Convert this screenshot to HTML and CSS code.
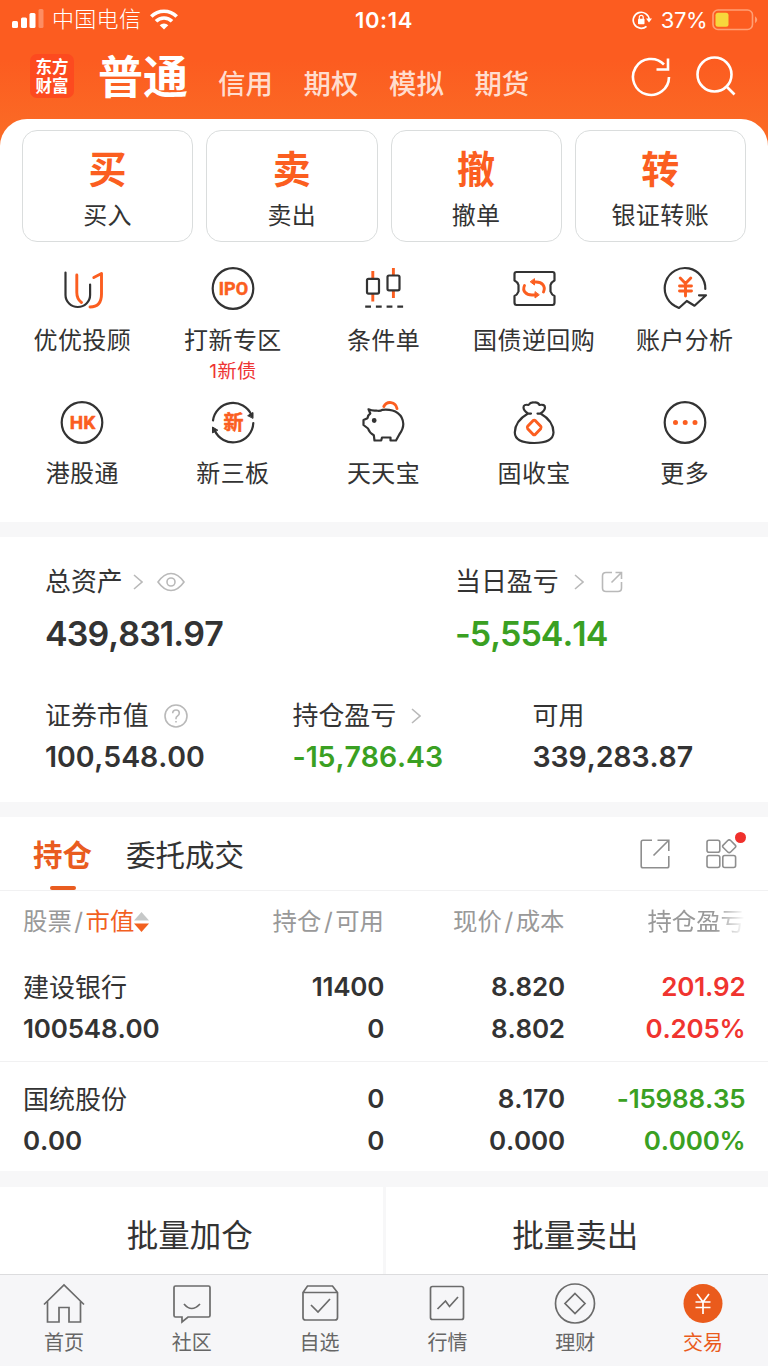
FILE: index.html
```html
<!DOCTYPE html>
<html lang="zh-CN">
<head>
    <meta charset="utf-8">
    <title>交易</title>
    <link rel="stylesheet" href="styles.css">
</head>
<body>
    <header class="top">
        <div class="status">
            <div class="status-left">
                <svg width="32" height="20" viewBox="0 0 32 20" fill="#fff">
                    <rect x="0" y="12" width="6" height="7" rx="1.5"/>
                    <rect x="9" y="8.500" width="6" height="10.500" rx="1.500"/>
                    <rect x="17.500" y="4" width="6" height="15" rx="1.500"/>
                    <rect x="26.500" y="0" width="5" height="19" rx="1.500" opacity=".3"/>
                </svg>
                <span class="carrier">中国电信</span>
                <svg width="28" height="21" viewBox="0 0 28 21" fill="none" stroke="#fff" stroke-width="3.600">
                    <path d="M1.300 7.500a18 18 0 0 1 25.400 0"/>
                    <path d="M6 12.300a11.300 11.300 0 0 1 16 0"/>
                    <path d="M14 20.500l-4.300-4.300a6.200 6.200 0 0 1 8.600 0z" fill="#fff" stroke="none"/>
                </svg>
            </div>
            <span class="clock">10:14</span>
            <div class="status-right">
                <svg width="20" height="20" viewBox="0 0 20 20" fill="none" stroke="#fff" stroke-width="1.700">
                    <path d="M14.500 16.300a8 8 0 1 1 2.700-6.800"/>
                    <path d="M14 8.500h6l-3 4z" fill="#fff" stroke="none"/>
                    <rect x="6" y="8.700" width="6.500" height="5.500" rx=".8" fill="#fff" stroke="none"/>
                    <path d="M7.300 9V7.300a1.950 1.950 0 0 1 3.900 0V9" stroke-width="1.200"/>
                </svg>
                <span class="percent">37%</span>
                <svg width="46" height="22" viewBox="0 0 46 22">
                    <rect x="1" y="1" width="39.500" height="19.500" rx="5" fill="none" stroke="#ff9f74" stroke-width="1.600"/>
                    <rect x="3.500" y="3.700" width="13" height="14" rx="2.500" fill="#f7d83c"/>
                    <path d="M43 7.300q4.500 3.500 0 7z" fill="#ff9f74"/>
                </svg>
            </div>
        </div>
        <nav class="accounts">
            <div class="logo">东方<br>财富</div>
            <a class="account current">普通</a>
            <a class="account">信用</a>
            <a class="account">期权</a>
            <a class="account">模拟</a>
            <a class="account">期货</a>
            <div class="tools">
                <svg width="40" height="42" viewBox="0 0 40 42" fill="none" stroke="#fff" stroke-width="2.600">
                    <path d="M38 21A18 18 0 1 1 33 8.500"/>
                    <path d="M37 2.500V13.500H25.500"/>
                </svg>
                <svg width="40" height="42" viewBox="0 0 40 42" fill="none" stroke="#fff" stroke-width="2.600">
                    <circle cx="18.500" cy="18.500" r="17"/>
                    <path d="M30.500 30.500L38.500 38.500"/>
                </svg>
            </div>
        </nav>
    </header>

    <main class="sheet">
        <section class="actions">
            <a class="action"><b>买</b><span>买入</span></a>
            <a class="action"><b>卖</b><span>卖出</span></a>
            <a class="action"><b>撤</b><span>撤单</span></a>
            <a class="action"><b>转</b><span>银证转账</span></a>
        </section>

        <section class="grid">
            <a class="cell">
                <svg class="icon" viewBox="0 0 44 44">
                    <path d="M5.500 5.500V28a12.300 12 0 0 0 24.600 0V17.500"/>
                    <path class="hot" d="M16.800 8v17.500q0 6.500 4.700 10M33.800 10.500l7.700-4V27q0 13-11.500 13"/>
                </svg>
                <span>优优投顾</span>
            </a>
            <a class="cell">
                <svg class="icon" viewBox="0 0 44 44">
                    <circle cx="22" cy="21.500" r="20.300"/>
                    <text class="mark ipo" x="22.500" y="28">IPO</text>
                </svg>
                <span>打新专区</span>
                <em>1新债</em>
            </a>
            <a class="cell">
                <svg class="icon" viewBox="0 0 44 44">
                    <path class="hot butt" d="M11.800 4v7M11.800 27v7.500M32.400 1v7M32.400 23.500v7.500"/>
                    <rect x="6" y="11.800" width="12" height="14.800" rx="1.500"/>
                    <rect x="26.500" y="8.500" width="12" height="14.800" rx="1.500"/>
                    <path class="butt" d="M4.200 39.700h38" stroke-dasharray="5.800 4.900"/>
                </svg>
                <span>条件单</span>
            </a>
            <a class="cell">
                <svg class="icon" viewBox="0 0 44 44">
                    <path d="M4.500 5h36q2 0 2 2v6.500q-3 1.500-4 4.500v6.500q1 3 4 4.500v6.500q0 2.500-2 2.500h-36q-2 0-2-2.500V29q3-1.500 4-4.500V18q-1-3-4-4.500V7q0-2 2-2z"/>
                    <path class="hot" d="M12.500 18.500C10 24 14 28 20 28h4M31.500 25C34 19 30 15 24 15h-3"/>
                    <path class="hot fill" d="M22.500 12v6l-4-3zM23 25v6l4-3z"/>
                </svg>
                <span>国债逆回购</span>
            </a>
            <a class="cell">
                <svg class="icon" viewBox="0 0 44 44">
                    <path d="M42.300 22A20.300 20.300 0 1 0 12 39l4 2 7.800-7 7.700 4.700L43 28.300h-7"/>
                    <path class="hot" d="M17.200 11l5.300 5.600L27.800 11M22.500 17v12M16.500 19h12M16.500 24h12"/>
                </svg>
                <span>账户分析</span>
            </a>
            <a class="cell">
                <svg class="icon" viewBox="0 0 44 44">
                    <circle cx="22" cy="21.500" r="20.300"/>
                    <text class="mark" x="22.500" y="28">HK</text>
                </svg>
                <span>港股通</span>
            </a>
            <a class="cell">
                <svg class="icon" viewBox="0 0 44 44">
                    <path d="M2 19.500A20.200 20.200 0 0 1 40.500 14M42.300 22A20.200 20.200 0 0 1 3.500 29"/>
                    <path class="tip" d="M37 14.500l5-3v5.500zM1.500 31.500V26l5 3z"/>
                    <text class="mark cn" x="22.500" y="29">新</text>
                </svg>
                <span>新三板</span>
            </a>
            <a class="cell">
                <svg class="icon" viewBox="0 0 44 44">
                    <path d="M7.500 8.300q4 1.700 7.700 1.200 4 .8 6-.7C35 7.500 42 14 42.300 23q0 5-4 10.500L35 39.500h-5.500V36.500H21l-.8 3H13.500l-.7-5.300Q8.500 32 7 27.500L2.500 24v-5l4-1.800Q7 14 9.300 12.500z"/>
                    <circle class="solid" cx="13.200" cy="19.500" r="1.300"/>
                    <path class="hot" d="M22.800 5.500C26-.5 34.500.5 36 7.500"/>
                </svg>
                <span>天天宝</span>
            </a>
            <a class="cell">
                <svg class="icon" viewBox="0 0 44 44">
                    <path d="M16 12.500q-4.500-3-4.500-6 0-3.500 5-2.500 2-3 5.500-2.500 4-.5 5.500 2.500 5.500-1 5.500 2.500 0 3-4.500 6Q41.500 20 41.500 31.500 41 42 22.200 42 3 42 2.800 31.500 3 20 16 12.500zM15 12.600h4M25.500 12.600h4"/>
                    <path class="hot" d="M21 19.700l-5.300 5.600q-1 1.200 0 2.400l5.300 5.600q1.200 1 2.400 0l5.300-5.600q1-1.200 0-2.400l-5.300-5.600q-1.200-1-2.400 0z"/>
                </svg>
                <span>固收宝</span>
            </a>
            <a class="cell">
                <svg class="icon" viewBox="0 0 44 44">
                    <circle cx="22" cy="21.500" r="20.300"/>
                    <path class="hot dots" d="M12.500 21.500h0M22.200 21.500h0M32 21.500h0"/>
                </svg>
                <span>更多</span>
            </a>
        </section>
    </main>

    <section class="assets">
        <div class="assets-row total">
            <div>
                <div class="label">总资产
                    <svg class="chevron" viewBox="0 0 10 16"><path d="M1 1l8 7-8 7"/></svg>
                    <svg class="eye" viewBox="0 0 28 20"><path d="M1 10Q7 1.500 14 1.500T27 10Q21 18.500 14 18.500T1 10z"/><circle cx="14" cy="10" r="4"/></svg>
                </div>
                <div class="value">439,831.97</div>
            </div>
            <div>
                <div class="label">当日盈亏
                    <svg class="chevron far" viewBox="0 0 10 16"><path d="M1 1l8 7-8 7"/></svg>
                    <svg class="share" viewBox="0 0 22 22"><path d="M11 1.500H5q-3.500 0-3.500 3.500v12q0 3.500 3.500 3.500h12q3.500 0 3.500-3.500V11M10.500 11.500L20.500 1.500M14.500 1.500h6V8"/></svg>
                </div>
                <div class="value down">-5,554.14</div>
            </div>
        </div>
        <div class="assets-row detail">
            <div>
                <div class="label">证券市值
                    <svg class="help" viewBox="0 0 24 24"><circle cx="12" cy="12" r="11"/><path d="M8.700 9.300q0-3.300 3.300-3.300t3.300 3q0 1.700-1.700 2.900T12 14.500v.8M12 17v1.600"/></svg>
                </div>
                <div class="value">100,548.00</div>
            </div>
            <div>
                <div class="label">持仓盈亏
                    <svg class="chevron far" viewBox="0 0 10 16"><path d="M1 1l8 7-8 7"/></svg>
                </div>
                <div class="value down">-15,786.43</div>
            </div>
            <div>
                <div class="label">可用</div>
                <div class="value">339,283.87</div>
            </div>
        </div>
    </section>

    <section class="holdings">
        <div class="tabs">
            <a class="tab on">持仓</a>
            <a class="tab">委托成交</a>
            <div class="tab-tools">
                <svg width="30" height="30" viewBox="0 0 30 30"><path d="M12 1.200H3q-1.800 0-1.800 1.800v24q0 1.800 1.800 1.800h24q1.800 0 1.800-1.800V17M13.500 16.500L28.500 1.500M17.500 1.200h11.300V12"/></svg>
                <div class="widgets">
                    <svg width="31" height="30" viewBox="0 0 31 30"><rect x="1" y="1.200" width="12.800" height="12" rx="2"/><rect x="1" y="16.500" width="12.800" height="12" rx="2"/><rect x="16.800" y="16.500" width="12.800" height="12" rx="2"/><path d="M22 1.300l-4.800 4.800q-1.200 1.200 0 2.400L22 13.200q1.200 1 2.400 0l4.800-4.700q1.200-1.200 0-2.400L24.400 1.300q-1.200-1-2.400 0z"/></svg>
                    <i class="dot"></i>
                </div>
            </div>
        </div>
        <div class="row head">
            <div>股票<s>/</s><span class="sorted">市值</span><svg width="15" height="20" viewBox="0 0 15 20"><path d="M0 8.500L7.500 0 15 8.500z" fill="#c6c8c8"/><path d="M0 11.500h15L7.500 20z" fill="#f2601f"/></svg></div>
            <div>持仓<s>/</s>可用</div>
            <div>现价<s>/</s>成本</div>
            <div class="fade">持仓盈亏</div>
        </div>
        <div class="row stock">
            <div><span class="name">建设银行</span>100548.00</div>
            <div>11400<br>0</div>
            <div>8.820<br>8.802</div>
            <div class="up">201.92<br>0.205%</div>
        </div>
        <div class="row stock">
            <div><span class="name">国统股份</span>0.00</div>
            <div>0<br>0</div>
            <div>8.170<br>0.000</div>
            <div class="down">-15988.35<br>0.000%</div>
        </div>
    </section>

    <section class="batch">
        <a>批量加仓</a>
        <a>批量卖出</a>
    </section>

    <footer class="tabbar">
        <a>
            <svg viewBox="0 0 42 42"><path d="M1 21.500L21 2l20 19.500M4.500 18.500V39h11.500V24.500h10V39h11.500V18.500"/></svg>
            <span>首页</span>
        </a>
        <a>
            <svg viewBox="0 0 42 42"><path d="M4.500 3h33q1.500 0 1.500 1.500v28q0 1.500-1.500 1.500H17l-6 5v-5H4.500Q3 34 3 32.500v-28Q3 3 4.500 3zM13 21q7.500 9 16 0"/></svg>
            <span>社区</span>
        </a>
        <a>
            <svg viewBox="0 0 42 42"><path d="M8.500 3h25l5 6.500V34.500q0 2.500-2.500 2.500H6.500Q4 37 4 34.500V9.500zM4 9.500h34.500M12 22l7 7 12-13"/></svg>
            <span>自选</span>
        </a>
        <a>
            <svg viewBox="0 0 42 42"><rect x="4.500" y="3.500" width="33" height="33" rx="2"/><path d="M11.500 26l8-8 4 5.500 8.500-9.500"/></svg>
            <span>行情</span>
        </a>
        <a>
            <svg viewBox="0 0 42 42"><circle cx="21" cy="20.500" r="19.500"/><path d="M21 10.500l10 10-10 10-10-10z"/></svg>
            <span>理财</span>
        </a>
        <a class="active">
            <svg viewBox="0 0 42 42"><circle class="disc" cx="21" cy="20.500" r="19.500"/><path class="yen" d="M15 11l6 8 6-8M21 19v12M13.500 19h15M13.500 24.500h15"/></svg>
            <span>交易</span>
        </a>
    </footer>
</body>
</html>
```

FILE: styles.css
```css
* {
    box-sizing: border-box;
}

body {
    margin: 0;
    width: 768px;
    height: 1366px;
    overflow: hidden;
    background: #f7f7f8;
    color: #333;
    font-family: Inter, "Noto Sans CJK SC", sans-serif;
    font-kerning: none;
}

svg {
    display: block;
    flex: none;
}

/* header */
.top {
    height: 150px;
    background: linear-gradient(#fc5c20 60px, #fb6a25 130px);
    color: #fff;
}

.status {
    display: grid;
    grid-template-columns: 1fr auto 1fr;
    align-items: center;
    height: 40px;
    padding: 0 10px 0 12px;
}

.status-left,
.status-right {
    display: flex;
    align-items: center;
}

.status-left {
    padding-bottom: 2px;
}

.status-right {
    justify-content: flex-end;
}

.carrier {
    margin: 0 9px 0 8px;
    font-size: 22px;
    font-weight: 300;
    line-height: 28px;
    letter-spacing: .3px;
}

.clock {
    padding-right: 2px;
    font-size: 22px;
    font-weight: 600;
    letter-spacing: .6px;
}

.percent {
    margin: 0 5px 0 9px;
    font-size: 22px;
    letter-spacing: -.5px;
}

.accounts {
    display: flex;
    height: 79px;
    padding: 0 32px 0 30px;
}

.logo {
    width: 44px;
    height: 44px;
    margin: 14px 24px 0 0;
    padding-top: 4px;
    border-radius: 7px;
    background: #fd4a1f;
    font-size: 16.5px;
    font-weight: 700;
    line-height: 18.5px;
    text-align: center;
}

.account {
    margin: 26px 30.700px 0 0;
    color: #ffddcf;
    font-size: 27.400px;
    font-weight: 500;
    line-height: 36px;
}

.account.current {
    margin: 13px 30px 0 0;
    color: #fff;
    font-size: 45px;
    font-weight: 600;
    line-height: 50px;
}

.tools {
    display: flex;
    gap: 25px;
    margin: 16px 0 0 auto;
}

/* quick actions */
.sheet {
    height: 403px;
    margin-top: -31px;
    padding-top: 11px;
    border-radius: 27px 27px 0 0;
    background: #fff;
}

.actions {
    display: grid;
    grid-template-columns: repeat(4, 1fr);
    gap: 13px;
    padding: 0 22px;
}

.action {
    display: flex;
    flex-direction: column;
    align-items: center;
    height: 112px;
    padding-top: 14px;
    border: 1.500px solid #dadddd;
    border-radius: 15px;
}

.action b {
    color: #fb5e20;
    font-size: 38px;
    font-weight: 600;
    line-height: 48px;
}

.action span {
    margin-top: 5px;
    font-size: 24px;
    line-height: 36px;
    letter-spacing: .5px;
}

.grid {
    display: grid;
    grid-template-columns: repeat(5, 1fr);
    grid-auto-rows: 133.500px;
    margin-top: 25px;
    padding: 0 8px 0 7px;
}

.cell {
    display: flex;
    flex-direction: column;
    align-items: center;
    font-size: 24px;
    line-height: 36px;
    letter-spacing: .4px;
}

.cell span {
    margin-top: 11.500px;
}

.cell em {
    color: #ee3434;
    font-size: 19.200px;
    font-style: normal;
    line-height: 24px;
}

.icon {
    width: 44px;
    height: 44px;
    overflow: visible;
    fill: none;
    stroke: #333;
    stroke-width: 2.200;
    stroke-linecap: round;
    stroke-linejoin: round;
}

.icon .hot {
    stroke: #fb5e20;
    stroke-width: 2.900;
}

.icon .fill {
    fill: #fb5e20;
    stroke-width: 1;
}

.icon .solid {
    fill: #333;
}

.icon .tip {
    fill: #333;
    stroke-width: 1;
}

.icon .butt {
    stroke-linecap: butt;
}

.icon .dots {
    stroke-width: 5;
}

.icon .mark {
    fill: #fb5e20;
    stroke: #fb5e20;
    stroke-width: .5;
    font-family: Roboto, sans-serif;
    font-size: 19px;
    font-weight: 700;
    letter-spacing: 0;
    text-anchor: middle;
}

.icon .ipo {
    font-size: 18px;
}

.icon .cn {
    font-family: "Noto Sans CJK SC", sans-serif;
    font-size: 20px;
}

/* assets */
.assets {
    height: 265px;
    margin-top: 15px;
    padding: 27px 0 0 45px;
    background: #fff;
}

.assets-row {
    display: grid;
}

.total {
    grid-template-columns: 410px 1fr;
    height: 133.500px;
}

.detail {
    grid-template-columns: 247.500px 240px 1fr;
}

.label {
    display: flex;
    align-items: center;
    height: 36px;
    font-size: 25.900px;
    line-height: 36px;
}

.label svg {
    fill: none;
    stroke: #b9b9b9;
    stroke-width: 1.600;
}

.chevron {
    width: 10px;
    height: 16px;
    margin-left: 10px;
}

.chevron.far {
    margin-left: 15px;
}

.eye {
    width: 28px;
    height: 20px;
    margin-left: 14px;
}

.share {
    width: 22px;
    height: 22px;
    margin-left: 17px;
}

.help {
    width: 24px;
    height: 24px;
    margin-left: 15px;
}

.value {
    font-size: 34px;
    font-weight: 600;
    line-height: 40px;
    letter-spacing: -.9px;
}

.total .value {
    margin-top: 14px;
}

.total .down {
    letter-spacing: -1px;
}

.detail .value {
    margin-top: 3.500px;
    font-size: 28.500px;
    letter-spacing: -.1px;
}

.up {
    color: #f0342f;
}

.down {
    color: #3aa022;
}

/* holdings */
.holdings {
    height: 354px;
    margin-top: 15px;
    background: #fff;
}

.tabs {
    display: flex;
    height: 74px;
    padding: 0 31px 0 33px;
    border-bottom: 1px solid #f1f1f2;
}

.tab {
    display: flex;
    flex-direction: column;
    align-items: center;
    margin-right: 34px;
    font-size: 29.500px;
    line-height: 76px;
}

.tab.on {
    color: #e95c20;
    font-weight: 600;
}

.tab.on::after {
    content: "";
    width: 26px;
    height: 5px;
    margin-top: -7px;
    border-radius: 2px;
    background: #e95c20;
}

.tab-tools {
    display: flex;
    gap: 36px;
    margin: 22px 0 0 auto;
    fill: none;
    stroke: #8e8e8e;
    stroke-width: 1.600;
}

.widgets {
    position: relative;
    height: 30px;
}

.dot {
    position: absolute;
    top: -7px;
    right: -9px;
    width: 11px;
    height: 11px;
    border-radius: 50%;
    background: #f0302c;
}

.row {
    display: grid;
    grid-template-columns: repeat(4, 1fr);
    padding: 0 22.500px 0 23px;
    text-align: right;
}

.row > :first-child {
    text-align: left;
}

.head {
    height: 60px;
    padding-right: 23px;
    color: #999;
    font-size: 24.400px;
    line-height: 61px;
}

.head > :first-child {
    display: flex;
    align-items: center;
}

.head s {
    margin: 0 2.500px;
    text-decoration: none;
}

.sorted {
    color: #f2601f;
}

.fade {
    -webkit-mask-image: linear-gradient(90deg, #000 150px, transparent 180px);
    mask-image: linear-gradient(90deg, #000 150px, transparent 180px);
}

.stock {
    height: 110px;
    padding-top: 15px;
    font-size: 26px;
    font-weight: 600;
    line-height: 42px;
    letter-spacing: -.2px;
}

.stock + .stock {
    padding-top: 16px;
    border-top: 1px solid #f1f1f2;
}

.name {
    display: block;
    height: 42px;
    padding-top: 1px;
    font-weight: 400;
    letter-spacing: 0;
}

/* batch buttons */
.batch {
    display: grid;
    grid-template-columns: 1fr 1fr;
    gap: 3px;
    height: 87px;
    margin-top: 16px;
}

.batch a {
    display: flex;
    align-items: center;
    justify-content: center;
    padding: 11px 3px 0 0;
    background: #fff;
    font-size: 31.500px;
    line-height: 40px;
}

/* bottom bar */
.tabbar {
    display: grid;
    grid-template-columns: repeat(6, 1fr);
    height: 92px;
    padding: 8px 1px 0 0;
    border-top: 1px solid #dcdcde;
    background: #f6f6f8;
    color: #666;
}

.tabbar a {
    display: flex;
    flex-direction: column;
    align-items: center;
    font-size: 20px;
    line-height: 28px;
}

.tabbar span {
    margin-top: 4px;
}

.tabbar svg {
    width: 42px;
    height: 42px;
    fill: none;
    stroke: #6b6b6b;
    stroke-width: 1.700;
}

.tabbar .active {
    color: #ea5b1c;
}

.tabbar .disc {
    fill: #ea5b1c;
    stroke: none;
}

.tabbar .yen {
    stroke: #fff;
}
```
